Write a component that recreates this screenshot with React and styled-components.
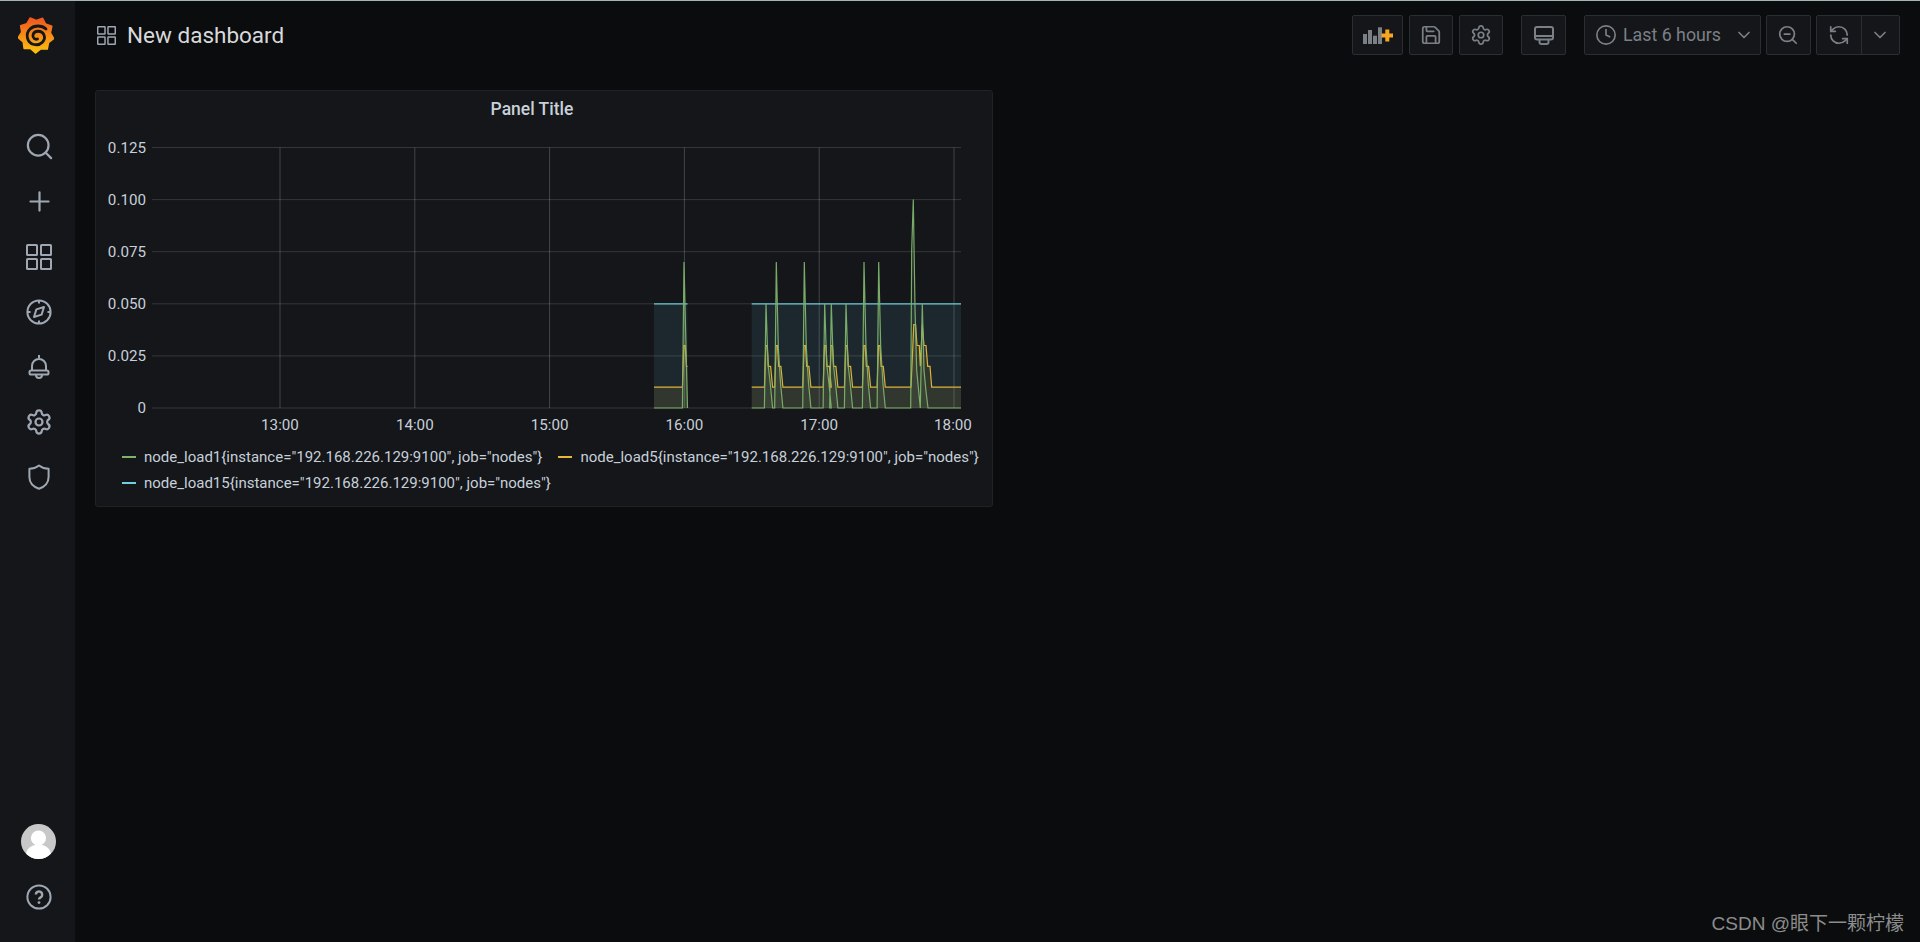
import React from 'react';
import styled, { createGlobalStyle } from 'styled-components';
import {
  Search,
  Plus,
  Settings,
  Save,
  Clock,
  ZoomOut,
  RefreshCcw,
  ChevronDown,
} from 'lucide-react';

const GlobalStyle = createGlobalStyle`
  html, body {
    margin: 0;
    height: 100%;
    background: #0b0c0e;
    font-family: Roboto, "Liberation Sans", sans-serif;
  }
  #root {
    height: 100%;
  }
`;

const LogoIcon = () => {
  const spikes = 9;
  const points = [];
  for (let i = 0; i < spikes * 2; i++) {
    const a = (i / (spikes * 2)) * Math.PI * 2 - 1.2;
    const r = i % 2 === 0 ? 18 : 14.6;
    points.push(`${(18 + Math.cos(a) * r).toFixed(1)},${(19 + Math.sin(a) * r).toFixed(1)}`);
  }
  return (
    <svg width="36" height="38" viewBox="0 0 36 38">
      <defs>
        <linearGradient id="logoFill" x1="0" y1="1" x2="0" y2="0">
          <stop offset="0" stopColor="#fcc30f" />
          <stop offset="1" stopColor="#f0561f" />
        </linearGradient>
      </defs>
      <polygon points={points.join(' ')} fill="url(#logoFill)" stroke="url(#logoFill)" strokeWidth="1.5" strokeLinejoin="round" />
      <path d="M28 13 C24 9 16 9 12 13 C7 18 9 27 16 28.5 C23 30 28 24 26 19 C24 14 16 14 15 19 C14.5 22 17 24 19.5 23" fill="none" stroke="#141619" strokeWidth="2.8" strokeLinecap="round" />
    </svg>
  );
};

const AppsIcon = ({ size = 26 }) => (
  <svg width={size} height={size} viewBox="0 0 26 26" fill="none" stroke="currentColor" strokeWidth="2">
    <rect x="1" y="1" width="10" height="10" rx="0.6" />
    <rect x="15" y="1" width="10" height="10" rx="0.6" />
    <rect x="1" y="15" width="10" height="10" rx="0.6" />
    <rect x="15" y="15" width="10" height="10" rx="0.6" />
  </svg>
);

const CompassIcon = () => (
  <svg width="26" height="26" viewBox="0 0 26 26" fill="none" stroke="currentColor" strokeWidth="2">
    <circle cx="13" cy="13" r="11.6" />
    <path d="M13 1.5v3M13 21.5v3M1.5 13h3M21.5 13h3" />
    <path d="M18 8l-2.4 7.6L8 18l2.4-7.6z" strokeLinejoin="round" />
  </svg>
);

const BellIcon = () => (
  <svg width="26" height="26" viewBox="0 0 26 26" fill="none" stroke="currentColor" strokeWidth="2" strokeLinejoin="round">
    <path d="M13 1v3" />
    <path d="M6 16.5V12a7 7 0 0 1 14 0v4.5" />
    <rect x="3.5" y="16.5" width="19" height="4" rx="1.6" />
    <path d="M10 21a3 3 0 0 0 6 0" />
  </svg>
);

const ShieldIcon = () => (
  <svg width="26" height="26" viewBox="0 0 26 26" fill="none" stroke="currentColor" strokeWidth="2" strokeLinejoin="round">
    <path d="M13 1.5C16 3.8 19 4.8 22.6 4.8V13C22.6 19 18.5 22.8 13 24.8C7.5 22.8 3.4 19 3.4 13V4.8C7 4.8 10 3.8 13 1.5Z" />
  </svg>
);

const HelpIcon = () => (
  <svg width="26" height="26" viewBox="0 0 26 26" fill="none" stroke="currentColor" strokeWidth="2">
    <circle cx="13" cy="13" r="11.6" />
    <path d="M9.8 10.6a3.2 3.2 0 1 1 4.8 2.8c-1 .6-1.6 1.1-1.6 2.2" strokeWidth="2.4" />
    <circle cx="13" cy="18.6" r="1.4" fill="currentColor" stroke="none" />
  </svg>
);

const BarAddIcon = () => (
  <svg width="30" height="17" viewBox="0 0 30 17">
    <g fill="#7b8087">
      <rect x="0" y="7" width="4" height="10" />
      <rect x="5" y="3" width="4" height="14" />
      <rect x="10" y="8.7" width="4" height="8.3" />
      <rect x="15" y="0.3" width="4" height="16.7" />
    </g>
    <path d="M22.3 2.5h4v4h3.7v4h-3.7v4h-4v-4H18.5v-4h3.8z" fill="#f7a623" />
  </svg>
);

const MonitorIcon = () => (
  <svg width="20" height="19" viewBox="0 0 20 19" fill="none" stroke="currentColor" strokeWidth="2" strokeLinejoin="round">
    <rect x="1" y="1" width="18" height="12.5" rx="2" />
    <path d="M1 10h18" />
    <path d="M5.5 13.5v2.5a2 2 0 0 0 2 2h5a2 2 0 0 0 2-2v-2.5" />
  </svg>
);

const navIcons = [
  <Search key="search" size={31} strokeWidth={1.7} />,
  <Plus key="plus" size={31} strokeWidth={1.7} />,
  <AppsIcon key="apps" />,
  <CompassIcon key="compass" />,
  <BellIcon key="bell" />,
  <Settings key="settings" size={28} strokeWidth={1.9} />,
  <ShieldIcon key="shield" />,
];

// [x of the peak in px, peak value in thousandths]
const peaks = [
  [684, 70],
  [766, 50],
  [776.3, 70],
  [804.3, 70],
  [824.7, 50],
  [831.3, 50],
  [846, 50],
  [864, 70],
  [878.7, 70],
];

const Y_ZERO = 408;
const PX_PER_UNIT = 2.084;
const y = (v) => Y_ZERO - v * PX_PER_UNIT;
const SEG_A = [654, 687.5];
const SEG_B = [751.7, 961];

const greenSpike = (p, v) => [
  [p - 1.6, 0],
  [p, v],
  [p + 2, v * 0.42],
  [p + 4.2, 12],
  [p + 6.6, 0],
];

const yellowSpike = (p) => [
  [p - 1.6, 10],
  [p - 0.2, 30],
  [p + 1.2, 30],
  [p + 2.4, 20],
  [p + 4.6, 20],
  [p + 6.6, 10],
];

const bigGreen = [
  [910.7, 0],
  [911.7, 76],
  [913.3, 100],
  [915, 48],
  [916.7, 18],
  [918.7, 8],
  [920.3, 0],
  [922.3, 50],
  [924, 18],
  [926, 8],
  [928, 0],
];

const bigYellow = [
  [911, 10],
  [913.8, 40],
  [915.6, 40],
  [917, 30],
  [919.3, 30],
  [920.3, 20],
  [922.3, 40],
  [924, 30],
  [926, 30],
  [927.7, 20],
  [930, 20],
  [931.7, 10],
];

const buildLine = (segment, base, spike, big) => {
  const out = [[segment[0], base]];
  peaks
    .filter(([p]) => p > segment[0] && p < segment[1])
    .forEach(([p, v]) => out.push(...spike(p, v).filter(([x]) => x <= segment[1])));
  if (segment === SEG_B) out.push(...big);
  const last = out[out.length - 1];
  if (segment === SEG_B) out.push([segment[1], base]);
  else out.push([segment[1], last[0] < segment[1] ? (base === 0 ? 0 : 20) : last[1]]);
  return out;
};

const toLine = (pts) => pts.map(([a, b], i) => `${i ? 'L' : 'M'}${a} ${y(b).toFixed(1)}`).join(' ');
const toArea = (pts) =>
  `${toLine(pts)} L${pts[pts.length - 1][0]} ${Y_ZERO} L${pts[0][0]} ${Y_ZERO} Z`;

const series = [
  { name: 'blue', color: '#6ed0e0', lines: [[[SEG_A[0], 50], [SEG_A[1], 50]], [[SEG_B[0], 50], [SEG_B[1], 50]]] },
  { name: 'yellow', color: '#eab839', lines: [buildLine(SEG_A, 10, yellowSpike, []), buildLine(SEG_B, 10, yellowSpike, bigYellow)] },
  { name: 'green', color: '#7eb26d', lines: [buildLine(SEG_A, 0, greenSpike, []), buildLine(SEG_B, 0, greenSpike, bigGreen)] },
];

const yTicks = ['0.125', '0.100', '0.075', '0.050', '0.025', '0'];
const xTicks = ['13:00', '14:00', '15:00', '16:00', '17:00', '18:00'];

// viewBox uses page pixels, the svg sits right under the panel title
const Chart = () => (
  <ChartSvg viewBox="96 126 896 316">
    {yTicks.map((label, i) => {
      const ty = Y_ZERO - (5 - i) * 52.1;
      return (
        <g key={label}>
          <GridLine x1="152" x2="961" y1={ty} y2={ty} />
          <AxisText x="146" y={ty + 5} textAnchor="end">{label}</AxisText>
        </g>
      );
    })}
    {xTicks.map((label, i) => {
      const tx = 280 + i * 134.8;
      return (
        <g key={label}>
          <GridLine $vertical x1={tx} x2={tx} y1="147.5" y2={Y_ZERO} />
          <AxisText x={i === 5 ? tx - 1 : tx} y="430" textAnchor="middle">{label}</AxisText>
        </g>
      );
    })}
    {series.map((s) =>
      s.lines.map((pts, i) => (
        <g key={s.name + i}>
          <path d={toArea(pts)} fill={s.color} fillOpacity="0.1" />
          <path d={toLine(pts)} fill="none" stroke={s.color} strokeWidth="1.2" strokeOpacity="0.95" />
        </g>
      ))
    )}
  </ChartSvg>
);

const legend = [
  { color: '#7eb26d', text: 'node_load1{instance="192.168.226.129:9100", job="nodes"}' },
  { color: '#eab839', text: 'node_load5{instance="192.168.226.129:9100", job="nodes"}' },
  { color: '#6ed0e0', text: 'node_load15{instance="192.168.226.129:9100", job="nodes"}' },
];

const App = () => (
  <Page>
    <GlobalStyle />
    <Sidebar>
      <Logo><LogoIcon /></Logo>
      <Nav>
        {navIcons.map((icon) => (
          <NavItem key={icon.key}>{icon}</NavItem>
        ))}
      </Nav>
      <SidebarBottom>
        <NavItem>
          <Avatar>
            <svg width="35" height="35" viewBox="0 0 35 35">
              <circle cx="17.5" cy="14" r="7.6" fill="#fff" />
              <ellipse cx="17.5" cy="31" rx="12.5" ry="10.5" fill="#fff" />
            </svg>
          </Avatar>
        </NavItem>
        <NavItem>
          <HelpIcon />
        </NavItem>
      </SidebarBottom>
    </Sidebar>
    <Main>
      <Header>
        <TitleGroup>
          <AppsIcon size={19} />
          <Title>New dashboard</Title>
        </TitleGroup>
        <Toolbar>
          <ToolGroup>
            <ToolButton $width={51.5}><BarAddIcon /></ToolButton>
            <ToolButton><Save size={22} strokeWidth={1.9} /></ToolButton>
            <ToolButton><Settings size={22} strokeWidth={1.9} /></ToolButton>
          </ToolGroup>
          <ToolGroup>
            <ToolButton><MonitorIcon /></ToolButton>
          </ToolGroup>
          <ToolGroup>
            <TimeButton>
              <Clock size={22} strokeWidth={1.8} />
              <TimeLabel>Last 6 hours</TimeLabel>
              <ChevronDown size={20} strokeWidth={2} />
            </TimeButton>
            <ToolButton><ZoomOut size={22} strokeWidth={1.9} /></ToolButton>
            <Split>
              <SplitLeft><RefreshCcw size={22} strokeWidth={1.9} /></SplitLeft>
              <SplitRight><ChevronDown size={20} strokeWidth={2} /></SplitRight>
            </Split>
          </ToolGroup>
        </Toolbar>
      </Header>
      <Panel>
        <PanelTitle>Panel Title</PanelTitle>
        <Chart />
        <Legend>
          {legend.map((item) => (
            <LegendItem key={item.text}>
              <LegendDash $color={item.color} />
              <span>{item.text}</span>
            </LegendItem>
          ))}
        </Legend>
      </Panel>
    </Main>
    <Watermark>CSDN @眼下一颗柠檬</Watermark>
  </Page>
);

const Page = styled.div`
  position: relative;
  display: flex;
  height: 100%;
  min-height: 942px;
  overflow: hidden;
  background: #0b0c0e;
  border-top: 1px solid #a3b5b5;
  box-sizing: border-box;
`;

const Sidebar = styled.nav`
  display: flex;
  flex-direction: column;
  align-items: flex-start;
  width: 75px;
  flex: none;
  padding-bottom: 18px;
  box-sizing: border-box;
  background: #141619;
  color: #9fa7b3;
`;

const Logo = styled.div`
  display: flex;
  justify-content: center;
  align-items: center;
  width: 71px;
  height: 68px;
  margin-bottom: 50px;
`;

const Nav = styled.div`
  display: flex;
  flex-direction: column;
`;

const NavItem = styled.div`
  display: flex;
  justify-content: center;
  align-items: center;
  width: 78px;
  height: 55px;
`;

const SidebarBottom = styled.div`
  display: flex;
  flex-direction: column;
  margin-top: auto;
`;

const Avatar = styled.div`
  width: 35px;
  height: 35px;
  margin-right: 1.5px;
  border-radius: 50%;
  overflow: hidden;
  background: #c8c8c8;
`;

const Main = styled.main`
  flex: 1;
  min-width: 0;
  padding: 0 20.4px 0 20px;
`;

const Header = styled.header`
  display: flex;
  justify-content: space-between;
  align-items: center;
  height: 68px;
`;

const TitleGroup = styled.div`
  display: flex;
  align-items: center;
  gap: 11px;
  padding-left: 2px;
  color: #9fa7b3;
`;

const Title = styled.h1`
  margin: 0;
  font-size: 22.5px;
  font-weight: 400;
  color: #d8d9da;
`;

const Toolbar = styled.div`
  display: flex;
  gap: 18px;
`;

const ToolGroup = styled.div`
  display: flex;
  gap: 5.3px;
`;

const ToolButton = styled.div`
  display: flex;
  justify-content: center;
  align-items: center;
  width: ${(p) => p.$width || 44.7}px;
  height: 40px;
  box-sizing: border-box;
  border: 1px solid #2a2d32;
  border-radius: 2px;
  background: #141619;
  color: #7b8087;
`;

const TimeButton = styled(ToolButton)`
  width: 176.7px;
  justify-content: flex-start;
  padding: 0 6px 0 10px;
`;

const TimeLabel = styled.span`
  flex: 1;
  margin: -2px 0 0 6px;
  font-size: 17.8px;
  color: #7b8087;
`;

const Split = styled.div`
  display: flex;
  width: 83.6px;
  height: 40px;
  box-sizing: border-box;
  border: 1px solid #2a2d32;
  border-radius: 2px;
  background: #141619;
  color: #7b8087;
`;

const SplitLeft = styled.div`
  display: flex;
  justify-content: center;
  align-items: center;
  width: 44px;
  border-right: 1px solid #2a2d32;
`;

const SplitRight = styled.div`
  display: flex;
  flex: 1;
  justify-content: center;
  align-items: center;
`;

const Panel = styled.section`
  display: flex;
  flex-direction: column;
  width: 898px;
  height: 417px;
  margin-top: 21px;
  box-sizing: border-box;
  border: 1px solid #202226;
  border-radius: 3px;
  background: #141619;
`;

const PanelTitle = styled.h2`
  margin: 0;
  height: 35px;
  padding: 7.5px 24px 0 0;
  box-sizing: border-box;
  text-align: center;
  font-size: 17.5px;
  font-weight: 500;
  color: #c7d0d9;
`;

const ChartSvg = styled.svg`
  display: block;
  flex: none;
  width: 896px;
  height: 316px;
`;

const GridLine = styled.line`
  stroke: #ffffff;
  stroke-opacity: ${(p) => (p.$vertical ? 0.2 : 0.14)};
  stroke-width: 1;
`;

const AxisText = styled.text`
  fill: #c7d0d9;
  font-size: 15.2px;
  font-family: Roboto, sans-serif;
`;

const Legend = styled.div`
  display: flex;
  flex-wrap: wrap;
  gap: 0 16px;
  margin-top: 2px;
  padding-left: 26px;
  font-size: 15px;
  color: #c7d0d9;
`;

const LegendItem = styled.div`
  display: flex;
  align-items: center;
  gap: 8px;
  height: 26px;
  white-space: nowrap;
`;

const LegendDash = styled.i`
  display: block;
  width: 14px;
  height: 2px;
  background: ${(p) => p.$color};
`;

const Watermark = styled.div`
  position: absolute;
  right: 16px;
  bottom: 7px;
  font-family: "Liberation Sans", "Noto Sans CJK SC", sans-serif;
  font-size: 19px;
  color: #8c8c8c;
`;

export default App;
